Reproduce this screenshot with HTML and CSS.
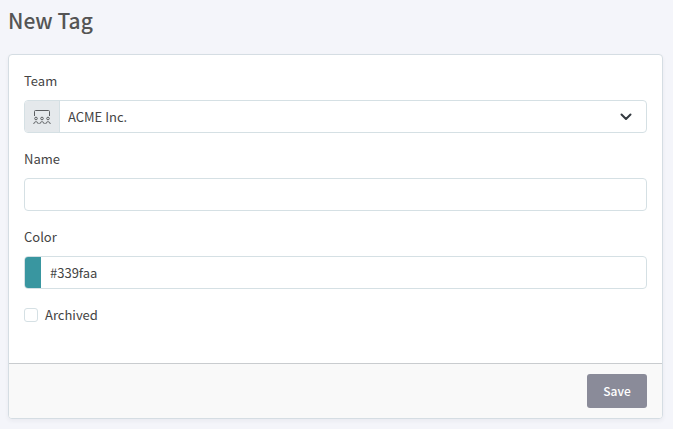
FILE: index.html
```html
<!DOCTYPE html>
<html lang="en">
<head>
    <meta charset="UTF-8">
    <meta name="viewport" content="width=device-width, initial-scale=1.0">
    <title>New Tag</title>
    <link rel="stylesheet" href="styles.css">
</head>
<body>
    <h1>New Tag</h1>
    <form class="card">
        <div class="card-body">
            <div class="group">
                <label for="team">Team</label>
                <div class="field">
                    <span class="addon">
                        <svg width="18" height="16" viewBox="0 0 18 16" fill="none" stroke="#5c5f62">
                            <path d="M1.500 7V2.500a1 1 0 0 1 1-1H15.500a1 1 0 0 1 1 1V7"/>
                            <circle cx="3" cy="9.500" r="1.300"/>
                            <circle cx="9" cy="9.500" r="1.300"/>
                            <circle cx="15" cy="9.500" r="1.300"/>
                            <path d="M.8 15c0-3 4.400-3 4.400 0M6.800 15c0-3 4.400-3 4.400 0M12.800 15c0-3 4.400-3 4.400 0"/>
                        </svg>
                    </span>
                    <div class="select">
                        <select id="team">
                            <option>ACME Inc.</option>
                        </select>
                        <svg class="arrow" width="12" height="8" viewBox="0 0 12 8" fill="none" stroke="#343a40" stroke-width="2" stroke-linecap="round" stroke-linejoin="round">
                            <path d="M1.500 1.500 6 6l4.500-4.500"/>
                        </svg>
                    </div>
                </div>
            </div>
            <div class="group">
                <label for="name">Name</label>
                <div class="field">
                    <input type="text" id="name">
                </div>
            </div>
            <div class="group">
                <label for="color">Color</label>
                <div class="field">
                    <span class="swatch"></span>
                    <input type="text" id="color" value="#339faa">
                </div>
            </div>
            <div class="check">
                <input type="checkbox" id="archived">
                <label for="archived">Archived</label>
            </div>
        </div>
        <div class="card-footer">
            <button type="button">Save</button>
        </div>
    </form>
</body>
</html>
```

FILE: styles.css
```css
*{box-sizing: border-box;}
body{
    margin: 0;
    padding: 6px 10px 10px 8px;
    background: #f4f5fa;
    color: #444;
    font: 400 13px/20px "Noto Sans CJK SC", "Noto Sans", sans-serif;
}
h1{
    margin: 0 0 20px;
    color: #555;
    font-size: 21px;
    line-height: 28px;
    font-weight: 500;
}
/* card */
.card{
    background: #fff;
    border: 1px solid #d5dde3;
    border-radius: 4px;
    box-shadow: 0 2px 4px rgba(30, 40, 60, .05);
    overflow: hidden;
}
.card-body{padding: 16px 15px 38px;}
.group{margin-bottom: 16px;}
.group label{
    display: block;
    margin-bottom: 9px;
}
/* bordered box round each control */
.field{
    display: flex;
    height: 33px;
    border: 1px solid #d5e0e4;
    border-radius: 4px;
    overflow: hidden;
}
.addon{
    display: flex;
    align-items: center;
    justify-content: center;
    width: 35px;
    background: #e5e9ec;
    border-right: 1px solid #d5e0e4;
}
.swatch{
    width: 16px;
    background: #3996a0;
}
.select{
    display: grid;
    flex: 1;
    align-items: center;
}
.select select, .arrow{grid-area: 1 / 1;}
.arrow{
    justify-self: end;
    margin-right: 14px;
    pointer-events: none;
}
select, .field input{
    flex: 1;
    width: 100%;
    min-width: 0;
    height: 100%;
    padding: 0 8px;
    border: 0;
    background: transparent;
    color: inherit;
    font: inherit;
    appearance: none;
}
.field .swatch + input{padding-left: 9px;}
.check{
    display: flex;
    align-items: center;
    gap: 7px;
}
.check input{
    width: 14px;
    height: 14px;
    margin: 0;
    border: 1px solid #d5e0e4;
    border-radius: 3px;
    background: #fff;
    appearance: none;
}
.check input:checked{background: #3996a0;}
/* footer */
.card-footer{
    display: flex;
    justify-content: flex-end;
    padding: 10px 15px;
    background: #f9f9f9;
    border-top: 1px solid #c9cccf;
}
button{
    width: 60px;
    height: 34px;
    padding: 0;
    border: 0;
    border-radius: 3px;
    background: #8a8b99;
    color: #fff;
    font: inherit;
    font-size: 12px;
    font-weight: 500;
}
```
